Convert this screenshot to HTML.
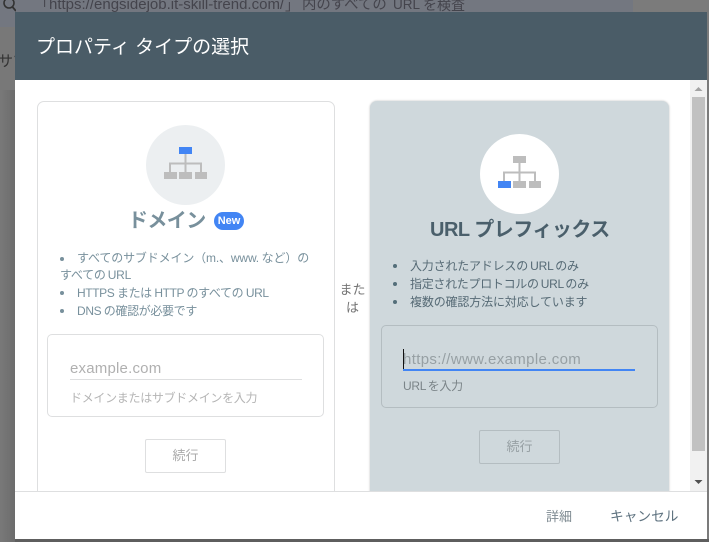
<!DOCTYPE html>
<html lang="ja"><head><meta charset="utf-8">
<style>
html,body{margin:0;padding:0;width:709px;height:542px;overflow:hidden;background:#7b7b7b}
body{position:relative;font-family:"Liberation Sans","Noto Sans CJK JP",sans-serif}
.a{position:absolute;white-space:nowrap}
.b{position:absolute;box-sizing:border-box}
.li{font-size:12px;line-height:18px;letter-spacing:-.15px}
.dot{position:absolute;width:4px;height:4px;border-radius:50%}
.t{position:absolute;white-space:nowrap;top:-4px;line-height:18px;color:#44444c}
</style></head><body>
<!-- backdrop -->
<div class="b" style="left:0;top:0;width:283px;height:27px;background:#737780"></div>
<div class="b" style="left:283px;top:0;width:350px;height:12px;background:#737780"></div>
<div class="b" style="left:0;top:27px;width:15px;height:515px;background:#787878"></div>
<div class="b" style="left:0;top:90px;width:15px;height:452px;background:linear-gradient(90deg,#797979,#6c6c6c)"></div>
<div class="b" style="left:15px;top:539px;width:694px;height:3px;background:#5e5e5e"></div>
<svg class="b" style="left:0;top:0" width="16" height="14" viewBox="0 0 16 14"><circle cx="9" cy="3" r="5" fill="none" stroke="#333" stroke-width="1.6"/><path d="M12.5 7 L16 11" stroke="#333" stroke-width="1.8"/></svg>
<div class="t" style="left:35px;font-size:14px">「</div>
<div class="t" style="left:49px;font-size:15px">https://engsidejob.it-skill-trend.com/</div>
<div class="t" style="left:285px;font-size:14px">」</div>
<div class="t" style="left:302px;font-size:14.400px">内のすべての</div>
<div class="t" style="left:393px;font-size:13.500px">URL</div>
<div class="t" style="left:423px;font-size:14px">を検査</div>
<div class="a" style="left:-2px;top:52px;font-size:15px;line-height:20px;color:#333;width:17px;overflow:hidden">サマ</div>

<!-- dialog -->
<div class="b" style="left:15px;top:12px;width:692px;height:527px;background:#fff;overflow:hidden">
  <div class="b" style="left:0;top:0;width:692px;height:68px;background:#4a5c67"></div>
  <div class="a" style="left:21px;top:22px;font-size:19px;line-height:28px;color:#fff">プロパティ タイプの選択</div>

  <!-- left card -->
  <div class="b" style="left:22px;top:89px;width:298px;height:460px;border:1px solid #dedfe0;border-radius:7px;background:#fff"></div>
  <div class="b" style="left:131px;top:113px;width:79px;height:80px;border-radius:50%;background:#eceff1"></div>
  <svg class="b" style="left:131px;top:113px" width="79" height="80" viewBox="0 0 79 80">
    <rect x="33" y="22" width="13" height="7" fill="#4285f4"/>
    <path d="M39.5 29V47M24 47V38.500H55V47" fill="none" stroke="#bdbdbd" stroke-width="2"/>
    <rect x="18" y="47" width="13" height="7" fill="#bdbdbd"/><rect x="33" y="47" width="13" height="7" fill="#bdbdbd"/><rect x="49" y="47" width="12" height="7" fill="#bdbdbd"/>
  </svg>
  <div class="a" style="left:113px;top:195px;font-size:20px;line-height:28px;font-weight:700;color:#78909c;letter-spacing:-.6px">ドメイン</div>
  <div class="b" style="left:199px;top:200px;width:30px;height:18px;border-radius:9px;background:#4285f4;color:#fff;font-size:11px;font-weight:700;line-height:18px;text-align:center">New</div>
  <div class="dot" style="left:45px;top:245px;background:#78909c"></div>
  <div class="a li" style="left:62px;top:237px;color:#78909c;word-spacing:-.5px">すべてのサブドメイン（m.、www. など）の</div>
  <div class="a li" style="left:45px;top:254px;color:#78909c;word-spacing:-1px;letter-spacing:-.25px">すべての URL</div>
  <div class="dot" style="left:45px;top:279px;background:#78909c"></div>
  <div class="a li" style="left:62px;top:272px;color:#78909c;letter-spacing:-.4px;word-spacing:-.3px">HTTPS または HTTP のすべての URL</div>
  <div class="dot" style="left:45px;top:297px;background:#78909c"></div>
  <div class="a li" style="left:62px;top:290px;color:#78909c;letter-spacing:-.35px;word-spacing:-.5px">DNS の確認が必要です</div>
  <div class="b" style="left:32px;top:322px;width:277px;height:83px;border:1px solid #dedfe0;border-radius:5px"></div>
  <div class="a" style="left:55px;top:347px;font-size:15px;line-height:20px;color:#b0b0b0;letter-spacing:.2px">example.com</div>
  <div class="b" style="left:55px;top:367px;width:232px;height:1px;background:#dedfe0"></div>
  <div class="a" style="left:55px;top:377px;font-size:12px;line-height:18px;color:#b5b5b5;letter-spacing:-.3px">ドメインまたはサブドメインを入力</div>
  <div class="b" style="left:130px;top:427px;width:81px;height:34px;border:1px solid #dedfe0;border-radius:2px;font-size:13px;line-height:32px;text-align:center;color:#aaa">続行</div>

  <!-- or -->
  <div class="a" style="left:320px;top:269px;width:35px;font-size:13px;line-height:18px;color:#757575;text-align:center;white-space:normal">また<br>は</div>

  <!-- right card -->
  <div class="b" style="left:355px;top:89px;width:299px;height:460px;border-radius:7px;background:#cfd8dc;box-shadow:0 0 2px rgba(0,0,0,.25)"></div>
  <div class="b" style="left:465px;top:122px;width:79px;height:80px;border-radius:50%;background:#fff"></div>
  <svg class="b" style="left:465px;top:122px" width="79" height="80" viewBox="0 0 79 80">
    <rect x="33" y="22" width="13" height="7" fill="#bdbdbd"/>
    <path d="M39.500 29V47M24 47V38.500H55V47" fill="none" stroke="#bdbdbd" stroke-width="2"/>
    <rect x="18" y="47" width="13" height="7" fill="#4285f4"/><rect x="33" y="47" width="13" height="7" fill="#bdbdbd"/><rect x="49" y="47" width="12" height="7" fill="#bdbdbd"/>
  </svg>
  <div class="a" style="left:415px;top:204px;font-size:20px;line-height:28px;font-weight:700;color:#4a5f6b;letter-spacing:-.5px">URL プレフィックス</div>
  <div class="dot" style="left:378px;top:252px;background:#546e7a"></div>
  <div class="a li" style="left:395px;top:245px;color:#566a75;word-spacing:-1px;letter-spacing:-.2px">入力されたアドレスの URL のみ</div>
  <div class="dot" style="left:378px;top:270px;background:#546e7a"></div>
  <div class="a li" style="left:395px;top:263px;color:#566a75;word-spacing:-1px;letter-spacing:-.3px">指定されたプロトコルの URL のみ</div>
  <div class="dot" style="left:378px;top:288px;background:#546e7a"></div>
  <div class="a li" style="left:395px;top:281px;color:#566a75">複数の確認方法に対応しています</div>
  <div class="b" style="left:366px;top:313px;width:277px;height:83px;border:1px solid #b4bdc1;border-radius:5px"></div>
  <div class="b" style="left:388px;top:337px;width:1px;height:20px;background:#111"></div>
  <div class="a" style="left:388px;top:338px;font-size:15px;line-height:20px;color:#97a0a4;letter-spacing:.35px">https://www.example.com</div>
  <div class="b" style="left:388px;top:357px;width:232px;height:2px;background:#4285f4"></div>
  <div class="a" style="left:388px;top:365px;font-size:12px;line-height:18px;color:#7b8488;word-spacing:-1px;letter-spacing:-.3px">URL を入力</div>
  <div class="b" style="left:464px;top:418px;width:81px;height:34px;border:1px solid #b4bdc1;border-radius:2px;font-size:13px;line-height:32px;text-align:center;color:#97a0a4">続行</div>

  <!-- scrollbar -->
  <div class="b" style="left:675px;top:68px;width:17px;height:411px;background:#f1f1f1"></div>
  <div class="b" style="left:677px;top:85px;width:13px;height:354px;background:#c1c1c1"></div>
  <svg class="b" style="left:675px;top:68px" width="17" height="411" viewBox="0 0 17 411">
    <path d="M8.500 7L12.500 11H4.500Z" fill="#a3a3a3"/><path d="M4.500 400H12.500L8.500 404Z" fill="#505050"/>
  </svg>

  <!-- footer -->
  <div class="b" style="left:0;top:479px;width:692px;height:48px;background:#fff;border-top:1px solid #dedfe0"></div>
  <div class="a" style="left:531px;top:495px;font-size:13px;line-height:20px;color:#7e8a91">詳細</div>
  <div class="a" style="left:595px;top:495px;font-size:13.700px;line-height:20px;color:#5f7380">キャンセル</div>
</div>
</body></html>
